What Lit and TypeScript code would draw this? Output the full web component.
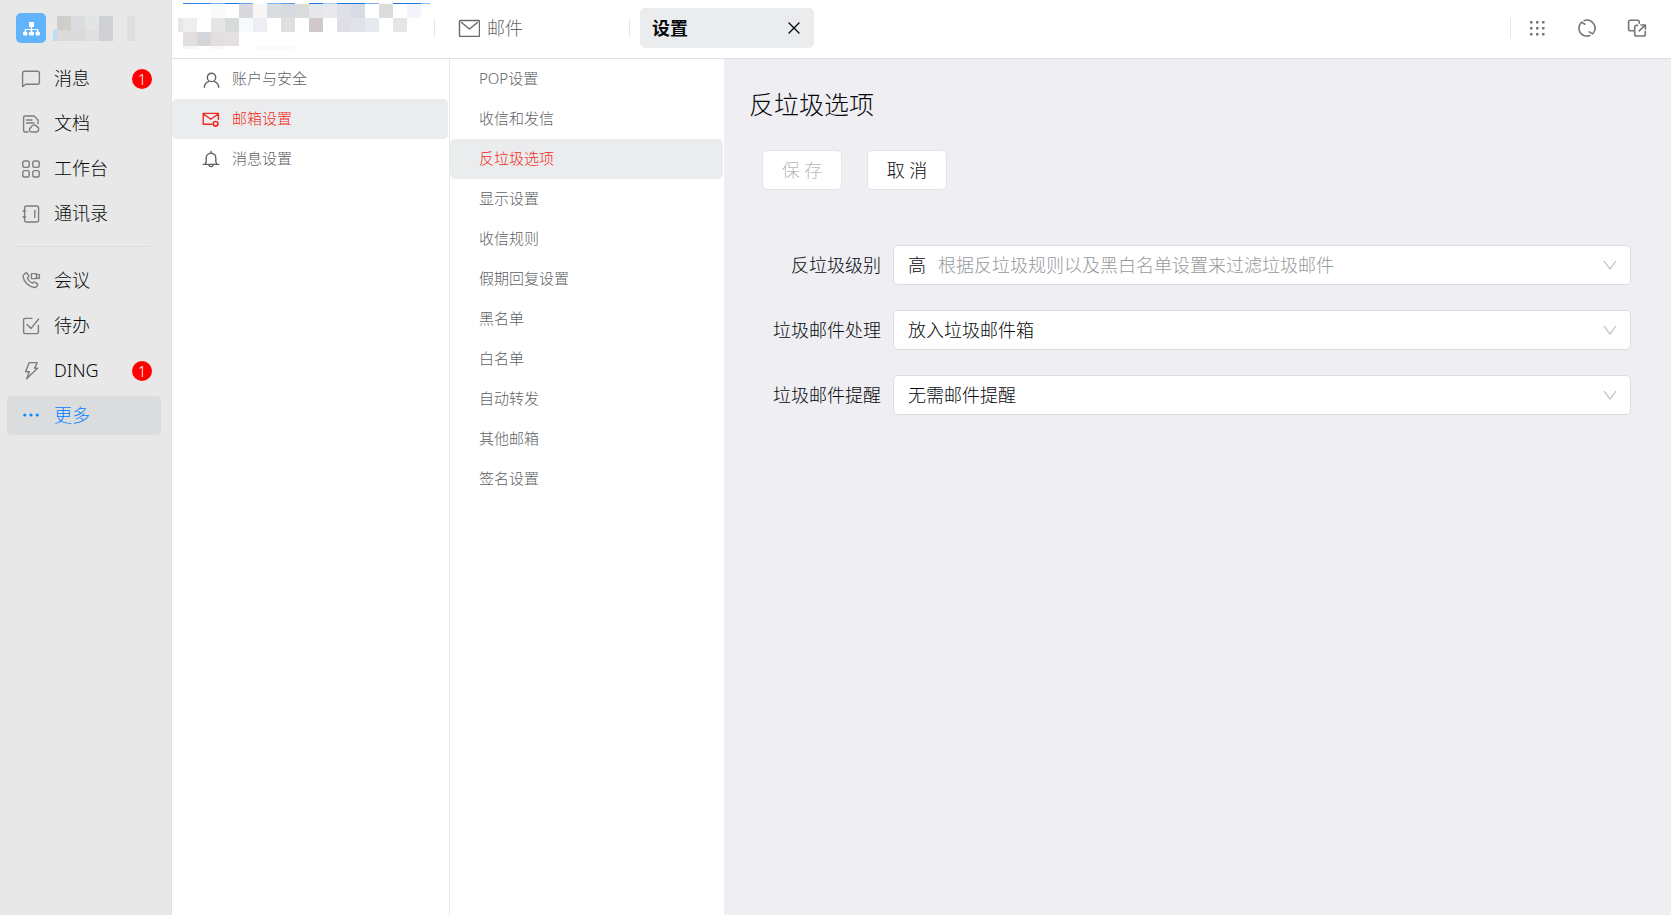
import { LitElement, html, css, svg, nothing, type TemplateResult, type SVGTemplateResult } from "lit";
import { customElement, state } from "lit/decorators.js";
import { classMap } from "lit/directives/class-map.js";

interface NavItem {
  id: string;
  label: string;
  icon: SVGTemplateResult;
  badge?: number;
}

interface Block {
  x: number;
  y: number;
  w?: number;
  h?: number;
  c: string;
}

const icon = (body: SVGTemplateResult, size = 20, cls = "icon"): TemplateResult => html`
  <svg class=${cls} width=${size} height=${size} viewBox="0 0 ${size} ${size}" aria-hidden="true">${body}</svg>
`;

const blocks = (list: Block[], size: number) =>
  list.map((b) => svg`<rect x=${b.x} y=${b.y} width=${b.w ?? size} height=${b.h ?? size} fill=${b.c}></rect>`);

const PRIMARY: NavItem[] = [
  {
    id: "msg",
    label: "消息",
    badge: 1,
    icon: svg`<path d="M1.6 17.6V4.2a2 2 0 0 1 2-2h12.8a2 2 0 0 1 2 2v9a2 2 0 0 1-2 2H4.800z"/>`,
  },
  {
    id: "doc",
    label: "文档",
    icon: svg`<path d="M7 18H4a1.4 1.4 0 0 1-1.4-1.4V3.4A1.4 1.4 0 0 1 4 2h9l4 4v3.6M5.6 6h5.4M5.6 9h7.4"/><path d="M10.6 18a2.3 2.3 0 0 1-.6-4.5 3.3 3.3 0 0 1 5.9-1 2.9 2.9 0 0 1-.3 5.5z"/>`,
  },
  {
    id: "work",
    label: "工作台",
    icon: svg`<rect x="1.8" y="2" width="6.4" height="6.4" rx="1.8"/><rect x="11.8" y="2" width="6.4" height="6.4" rx="1.8"/><rect x="1.8" y="11.6" width="6.4" height="6.4" rx="1.8"/><rect x="11.8" y="11.6" width="6.4" height="6.4" rx="1.8"/>`,
  },
  {
    id: "contacts",
    label: "通讯录",
    icon: svg`<rect x="3.6" y="2" width="14" height="16" rx="2"/><path d="M13.8 6.500v7M2 7h2.600M2 13h2.600"/>`,
  },
];

const SECONDARY: NavItem[] = [
  {
    id: "meeting",
    label: "会议",
    icon: svg`<path d="M3.3 3.2 4.6 2.1c.5-.4 1.1-.3 1.5.2l1.500 2.300c.3.5.2 1-.2 1.400l-1 .9c.8 2.300 2.400 4 4.900 5.300l1.200-1c.4-.3.9-.4 1.300-.1l2.500 1.700c.5.4.6 1 .2 1.500l-1.100 1.500c-.5.6-1.200.8-2 .7C7.500 15.600 3 11 2 5.600c-.1-1 .5-1.800 1.300-2.400z"/><path d="M10.400 2.600h5v5h-5zM15.400 3.600h3v3.600h-3"/>`,
  },
  {
    id: "todo",
    label: "待办",
    icon: svg`<path d="M11 2.400H4.200A1.600 1.600 0 0 0 2.600 4v12a1.600 1.600 0 0 0 1.600 1.600h11.600a1.600 1.600 0 0 0 1.600-1.600V9.500"/><path d="m6 8.400 4 4 7.600-9.400"/>`,
  },
  {
    id: "ding",
    label: "DING",
    badge: 1,
    icon: svg`<path d="M8.200 1.600h8l-2.600 5.600h3L5.600 17.800l2.800-7H4.600z"/>`,
  },
  {
    id: "more",
    label: "更多",
    icon: svg`<g fill="currentColor" stroke="none"><circle cx="3.800" cy="9" r="1.600"/><circle cx="10" cy="9" r="1.600"/><circle cx="16.200" cy="9" r="1.600"/></g>`,
  },
];

const SECTIONS: NavItem[] = [
  {
    id: "account",
    label: "账户与安全",
    icon: svg`<circle cx="9.500" cy="7.400" r="4.200"/><path d="M2.300 17.200c.2-3.200 2-4.900 4.700-5.800M16.700 17.200c-.2-3.200-2-4.900-4.700-5.800"/>`,
  },
  {
    id: "mailbox",
    label: "邮箱设置",
    icon: svg`<path d="M10 14.200H1.200V3.400h15.200v6M1.200 3.800 8.800 9.200l7.600-5.400"/><circle cx="13.600" cy="13.800" r="2.300" stroke-width="1.700"/>`,
  },
  {
    id: "notify",
    label: "消息设置",
    icon: svg`<path d="M1.200 14.400h15.600M3.200 14.200l1-2.400V8a4.800 4.800 0 0 1 9.600 0v3.800l1 2.400M9 3.200V1.400M7 15.600c.6 1.200 3.400 1.200 4 0"/>`,
  },
];

const PAGES = [
  "POP设置",
  "收信和发信",
  "反垃圾选项",
  "显示设置",
  "收信规则",
  "假期回复设置",
  "黑名单",
  "白名单",
  "自动转发",
  "其他邮箱",
  "签名设置",
];

const FIELDS = [
  { id: "level", label: "反垃圾级别", options: ["高", "中", "低"], hint: "根据反垃圾规则以及黑白名单设置来过滤垃圾邮件" },
  { id: "action", label: "垃圾邮件处理", options: ["放入垃圾邮件箱", "直接删除"] },
  { id: "remind", label: "垃圾邮件提醒", options: ["无需邮件提醒", "每天提醒"] },
];

const ORG_BLOCKS: Block[] = [
  { x: 0, y: 14, w: 4, h: 11, c: "#b9dcf7" },
  { x: 4, y: 0, c: "#cfcecb" },
  { x: 18, y: 0, c: "#dadcdd" },
  { x: 32, y: 0, c: "#e3e5e5" },
  { x: 46, y: 0, h: 25, c: "#cfd0d3" },
  { x: 74, y: 0, w: 8, h: 25, c: "#dcdfe0" },
  { x: 4, y: 14, h: 11, c: "#dcd9da" },
  { x: 18, y: 14, h: 11, c: "#d9dadb" },
  { x: 32, y: 14, h: 11, c: "#dfdfe0" },
];

const TAB_BLOCKS: Block[] = [
  { x: 5, y: 0, w: 28, h: 1, c: "#2f86ee" },
  { x: 33, y: 0, w: 14, h: 1, c: "#72aef2" },
  { x: 47, y: 0, w: 14, h: 1, c: "#1a78e6" },
  { x: 61, y: 0, w: 14, h: 1, c: "#6aa9f0" },
  { x: 89, y: 0, w: 14, h: 1, c: "#7db6f5" },
  { x: 103, y: 0, w: 14, h: 1, c: "#5b9eea" },
  { x: 131, y: 0, w: 14, h: 1, c: "#1a78e6" },
  { x: 145, y: 0, w: 14, h: 1, c: "#a9cbf2" },
  { x: 159, y: 0, w: 28, h: 1, c: "#1a78e6" },
  { x: 187, y: 0, w: 14, h: 1, c: "#7eb3f1" },
  { x: 215, y: 0, w: 28, h: 1, c: "#1a78e6" },
  { x: 243, y: 0, w: 9, h: 1, c: "#8dbcf3" },
  { x: 33, y: 1, c: "#f9fbfb" },
  { x: 61, y: 1, c: "#d9d8dc" },
  { x: 75, y: 1, c: "#f8f7f5" },
  { x: 89, y: 1, c: "#d9dddf" },
  { x: 103, y: 1, c: "#d7d9de" },
  { x: 117, y: 1, c: "#d9dddc" },
  { x: 131, y: 1, c: "#e6e6eb" },
  { x: 145, y: 1, c: "#e8e8ed" },
  { x: 159, y: 1, c: "#e0e0e8" },
  { x: 173, y: 1, c: "#d9dbe4" },
  { x: 201, y: 1, c: "#dddcdc" },
  { x: 229, y: 1, c: "#f4f5fa" },
  { x: 0, y: 15, w: 5, c: "#e6e6e6" },
  { x: 5, y: 15, c: "#eeeeef" },
  { x: 33, y: 15, c: "#e4e5e5" },
  { x: 47, y: 15, c: "#d5dcda" },
  { x: 61, y: 15, c: "#f7fafa" },
  { x: 75, y: 15, c: "#edeef3" },
  { x: 103, y: 15, c: "#dfdfe0" },
  { x: 131, y: 15, c: "#d0c8cb" },
  { x: 159, y: 15, c: "#dfdee7" },
  { x: 173, y: 15, c: "#e2e3e9" },
  { x: 187, y: 15, c: "#e6e9ed" },
  { x: 215, y: 15, c: "#e5e5e5" },
  { x: 5, y: 29, c: "#e3dfde" },
  { x: 19, y: 29, c: "#d4d6da" },
  { x: 33, y: 29, c: "#e2dfde" },
  { x: 47, y: 29, c: "#e5e0df" },
  { x: 5, y: 43, w: 14, h: 3, c: "#f6f6f6" },
  { x: 33, y: 43, w: 14, h: 3, c: "#f8f8f8" },
  { x: 77, y: 43, w: 40, h: 3, c: "#fafafa" },
];

@customElement("app-root")
export class AppRoot extends LitElement {
  @state() private nav = "more";
  @state() private section = "mailbox";
  @state() private page = "反垃圾选项";
  @state() private level = "高";

  static styles = css`
    :host {
      display: flex;
      min-height: 100vh;
      font-family: "Noto Sans", "Noto Sans CJK SC", sans-serif;
      font-weight: 300;
      font-size: 18px;
      line-height: 24px;
      color: #07090b;
      background: #fff;
    }
    *,
    *::before {
      box-sizing: border-box;
    }
    button,
    select {
      font: inherit;
      color: inherit;
      border: 0;
      background: none;
      margin: 0;
      padding: 0;
      cursor: pointer;
    }
    a {
      color: inherit;
      text-decoration: none;
    }
    svg {
      display: block;
      flex: none;
    }
    .icon {
      fill: none;
      stroke: currentColor;
      stroke-width: 1.4;
      stroke-linejoin: round;
      stroke-linecap: round;
    }

    .sidebar {
      flex: none;
      width: 172px;
      background: #e8e8e8;
      border-right: 1px solid #dfdfe0;
    }
    .org {
      display: flex;
      align-items: center;
      gap: 7px;
      height: 59px;
      padding: 0 0 3px 16px;
    }
    .nav {
      display: flex;
      flex-direction: column;
      gap: 6px;
      padding: 0 10px 0 7px;
    }
    .nav + .nav {
      position: relative;
      margin-top: 13px;
      padding-top: 15px;
    }
    .nav + .nav::before {
      content: "";
      position: absolute;
      top: 0;
      left: 16px;
      right: 20px;
      border-top: 1px solid #dcdcdc;
    }
    .nav-item {
      display: flex;
      align-items: center;
      gap: 13px;
      height: 39px;
      padding: 0 9px 0 14px;
      border-radius: 5px;
    }
    .label {
      padding-bottom: 2px;
    }
    .nav-item .icon {
      color: #7b7d80;
    }
    .nav-item.active {
      color: #0080ff;
      background: #dadcdd;
    }
    .nav-item.active .icon {
      color: #0a89ff;
    }
    .badge {
      width: 20px;
      height: 20px;
      margin-left: auto;
      border-radius: 50%;
      background: #f00;
      color: #fff;
      font-size: 15px;
      line-height: 20px;
      text-align: center;
    }

    .body {
      flex: 1;
      min-width: 0;
      display: flex;
      flex-direction: column;
    }
    .topbar {
      display: flex;
      align-items: center;
      height: 59px;
      padding: 0 24px 3px 6px;
      border-bottom: 1px solid #dfe0e2;
    }
    .org-tab {
      width: 257px;
      border-right: 1px solid #e6e7e8;
      height: 20px;
      display: flex;
      align-items: center;
    }
    .tab-mail {
      display: flex;
      align-items: center;
      gap: 7px;
      width: 195px;
      height: 20px;
      padding-left: 23px;
      border-right: 1px solid #e6e7e8;
      color: #66686a;
    }
    .tab-current {
      display: flex;
      align-items: center;
      justify-content: space-between;
      width: 174px;
      height: 40px;
      margin-left: 10px;
      padding: 0 13px 0 12px;
      border-radius: 5px;
      background: #ebeced;
      font-weight: 700;
    }
    .tools {
      display: flex;
      align-items: center;
      gap: 30px;
      height: 20px;
      margin-left: auto;
      padding-left: 16px;
      border-left: 1px solid #e6e7e8;
      color: #747677;
    }

    .panes {
      flex: 1;
      display: flex;
    }
    .pane {
      flex: none;
      font-size: 15px;
      color: #606264;
    }
    .sections {
      width: 278px;
      border-right: 1px solid #e8e9eb;
    }
    .pages {
      width: 274px;
    }
    .row {
      display: flex;
      align-items: center;
      gap: 12px;
      height: 40px;
      margin-right: 1px;
      padding: 0 30px;
      border-radius: 5px;
    }
    .pages .row {
      padding: 0 29px;
    }
    .row.active {
      background: #ebeced;
      color: #f02a20;
    }

    .content {
      flex: 1;
      min-width: 0;
      padding: 30px 40px 30px 25px;
      background: #eeeef3;
    }
    h1 {
      margin: 0;
      font-size: 25px;
      line-height: 30px;
      font-weight: 300;
    }
    .actions {
      display: flex;
      gap: 25px;
      padding: 31px 13px 55px;
    }
    .btn {
      width: 80px;
      height: 40px;
      border: 1px solid #e3e4e6;
      border-radius: 5px;
      background: #fff;
    }
    .btn:disabled {
      color: #b9babb;
      cursor: default;
    }
    .form {
      display: grid;
      grid-template-columns: 132px 1fr;
      gap: 25px 12px;
      align-items: center;
    }
    .form label {
      text-align: right;
    }
    .field {
      display: grid;
      align-items: center;
    }
    .field > * {
      grid-area: 1 / 1;
    }
    .field select {
      appearance: none;
      width: 100%;
      height: 40px;
      padding: 0 40px 0 14px;
      border: 1px solid #dcdde0;
      border-radius: 5px;
      background: #fff;
    }
    .hint {
      padding-left: 45px;
      color: #96989a;
      pointer-events: none;
    }
    .chevron {
      justify-self: end;
      margin-right: 13px;
      fill: none;
      stroke: #bcbdbf;
      stroke-width: 1.2;
      pointer-events: none;
    }
  `;

  private go(e: Event, key: "nav" | "section" | "page", value: string) {
    e.preventDefault();
    this[key] = value;
  }

  private navItem(item: NavItem) {
    return html`
      <a
        class=${classMap({ "nav-item": true, active: this.nav === item.id })}
        href="#${item.id}"
        @click=${(e: Event) => this.go(e, "nav", item.id)}
      >
        ${icon(item.icon)}
        <span class="label">${item.label}</span>
        ${item.badge ? html`<span class="badge">${item.badge}</span>` : nothing}
      </a>
    `;
  }

  render() {
    return html`
      <aside class="sidebar">
        <div class="org">
          <svg width="30" height="30" viewBox="0 0 30 30" aria-hidden="true">
            <rect width="30" height="30" rx="5" fill="#61b3fc" />
            <g fill="#fff">
              <rect x="13" y="9" width="5" height="5" />
              <rect x="7" y="18.500" width="4.500" height="4" rx="1.500" />
              <rect x="13" y="18.500" width="5" height="4" rx="1.500" />
              <rect x="19.500" y="18.500" width="4.500" height="4" rx="1.500" />
            </g>
            <path d="M15.500 14v5M9.300 19v-2.500h12.400V19" fill="none" stroke="#fff" stroke-width="1.200" />
          </svg>
          <svg width="82" height="25" viewBox="0 0 82 25" aria-hidden="true">${blocks(ORG_BLOCKS, 14)}</svg>
        </div>
        <nav class="nav">${PRIMARY.map((i) => this.navItem(i))}</nav>
        <nav class="nav">${SECONDARY.map((i) => this.navItem(i))}</nav>
      </aside>

      <div class="body">
        <header class="topbar">
          <div class="org-tab">
            <svg width="252" height="50" viewBox="0 0 252 50" aria-hidden="true">${blocks(TAB_BLOCKS, 14)}</svg>
          </div>
          <a class="tab-mail" href="#mail">
            <svg class="icon" width="22" height="18" viewBox="0 0 22 18" aria-hidden="true">
              <rect x="1.500" y="1.500" width="20" height="16" rx="1" />
              <path d="m3.500 3.500 8 6.500 8-6.500" />
            </svg>
            <span>邮件</span>
          </a>
          <div class="tab-current">
            <span>设置</span>
            <button aria-label="关闭">
              <svg class="icon" width="14" height="14" viewBox="0 0 14 14"><path d="m2 2 10 10M12 2 2 12" /></svg>
            </button>
          </div>
          <div class="tools">
            <button aria-label="应用">
              <svg width="20" height="20" viewBox="0 0 20 20" fill="currentColor">
                ${[3, 9, 15].flatMap((y) =>
                  [3, 9, 15].map((x) => svg`<rect x=${x} y=${y} width="2.500" height="2.500" rx=".5"></rect>`),
                )}
              </svg>
            </button>
            <button aria-label="刷新">
              ${icon(svg`<path d="M7.600 17.700A8 8 0 0 1 4 4.700M4.600 4.200l3.300 2M7.200 2.600a8 8 0 0 1 8.900 12.600M15.600 15.900l-3.300-2M12.800 17.500a8 8 0 0 1-5.200.2" stroke-width="1.600"/>`)}
            </button>
            <button aria-label="在新窗口打开">
              ${icon(svg`<path d="M6.600 12.800H3.400a1.800 1.800 0 0 1-1.800-1.800V4a1.800 1.800 0 0 1 1.800-1.800h7A1.800 1.800 0 0 1 12.200 4v1.200M10.500 7.400h-1A1.800 1.800 0 0 0 7.700 9.200v7A1.800 1.800 0 0 0 9.500 18h7a1.800 1.800 0 0 0 1.800-1.800v-3M12.200 12.800l6-5.600M14 7h4.400v4" stroke-width="1.600"/>`)}
            </button>
          </div>
        </header>

        <div class="panes">
          <nav class="pane sections">
            ${SECTIONS.map(
              (s) => html`
                <a
                  class=${classMap({ row: true, active: this.section === s.id })}
                  href="#${s.id}"
                  @click=${(e: Event) => this.go(e, "section", s.id)}
                >
                  ${icon(s.icon, 18)}<span class="label">${s.label}</span>
                </a>
              `,
            )}
          </nav>
          <nav class="pane pages">
            ${PAGES.map(
              (p) => html`
                <a
                  class=${classMap({ row: true, active: this.page === p })}
                  href="#${p}"
                  @click=${(e: Event) => this.go(e, "page", p)}
                  ><span class="label">${p}</span></a
                >
              `,
            )}
          </nav>

          <main class="content">
            <h1>${this.page}</h1>
            <div class="actions">
              <button class="btn" disabled>保 存</button>
              <button class="btn">取 消</button>
            </div>
            <form class="form">
              ${FIELDS.map(
                (f) => html`
                  <label for=${f.id}>${f.label}</label>
                  <div class="field">
                    <select
                      id=${f.id}
                      @change=${(e: Event) => {
                        if (f.hint) this.level = (e.target as HTMLSelectElement).value;
                      }}
                    >
                      ${f.options.map((o) => html`<option>${o}</option>`)}
                    </select>
                    ${f.hint && this.level === "高" ? html`<span class="hint">${f.hint}</span>` : nothing}
                    <svg class="chevron" width="16" height="12" viewBox="0 0 16 12" aria-hidden="true">
                      <path d="m2 2 6 8 6-8" />
                    </svg>
                  </div>
                `,
              )}
            </form>
          </main>
        </div>
      </div>
    `;
  }
}
